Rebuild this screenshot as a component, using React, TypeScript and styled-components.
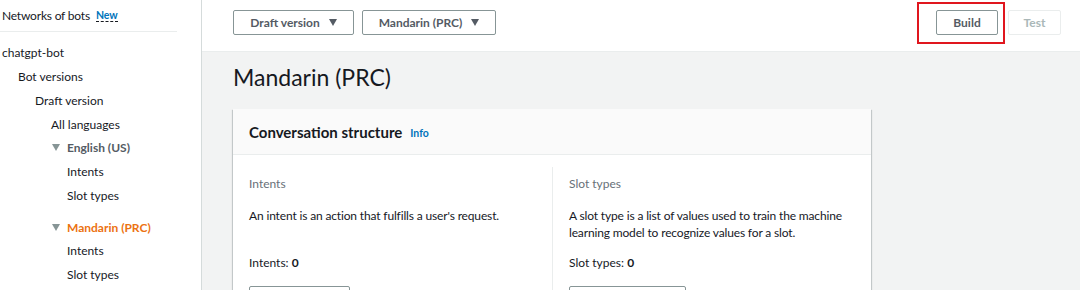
import React from "react";
import styled, { createGlobalStyle } from "styled-components";

const Global = createGlobalStyle`
  html, body { margin: 0; padding: 0; background: #f2f3f3; }
  body { font-family: Lato, Roboto, "Liberation Sans", sans-serif; color: #16191f; }
  * { box-sizing: border-box; }
`;

const Page = styled.div`
  display: flex;
  width: 1080px;
  height: 290px;
  overflow: hidden;
  background: #f2f3f3;
`;

const Sidebar = styled.nav`
  width: 202px;
  flex: none;
  background: #fff;
  border-right: 1px solid #d5dbdb;
  padding-top: 6px;
`;

const SideTop = styled.div`
  display: flex;
  align-items: center;
  gap: 6px;
  height: 19px;
  padding-left: 2px;
  font-size: 12px;
  letter-spacing: -0.2px;
  color: #16191f;
`;

const NewBadge = styled.span`
  font-size: 10.5px;
  font-weight: 700;
  letter-spacing: 0;
  color: #0073bb;
  border-bottom: 1px dashed #16191f;
  line-height: 12px;
`;

const SideDivider = styled.hr`
  width: 177px;
  margin: 6px 0 9px 0;
  border: none;
  border-top: 1px solid #eaeded;
`;

const NavItem = styled.div<{ $indent: number; $active?: boolean; $bold?: boolean; $gapTop?: number }>`
  display: flex;
  align-items: center;
  height: 23.75px;
  margin-top: ${(p) => p.$gapTop ?? 0}px;
  padding-left: ${(p) => p.$indent}px;
  font-size: 12px;
  font-weight: ${(p) => (p.$bold ? 700 : 400)};
  color: ${(p) => (p.$active ? "#ec7211" : p.$bold ? "#545b64" : "#16191f")};
`;

const Caret = styled.span`
  display: inline-block;
  width: 0;
  height: 0;
  border-left: 4px solid transparent;
  border-right: 4px solid transparent;
  border-top: 7px solid #879596;
  margin-right: 7px;
`;

const Main = styled.main`
  flex: 1;
  display: flex;
  flex-direction: column;
  min-width: 0;
`;

const TopBar = styled.div`
  flex: none;
  height: 52px;
  background: #fff;
  border-bottom: 1px solid #eaeded;
  display: flex;
  align-items: flex-start;
  padding: 10px 19px 0 31px;
  gap: 8px;
`;

const Dropdown = styled.button<{ $w: number }>`
  width: ${(p) => p.$w}px;
  height: 25px;
  background: #fff;
  border: 1px solid #879596;
  border-radius: 2px;
  display: flex;
  align-items: center;
  justify-content: center;
  gap: 9px;
  font-family: inherit;
  font-size: 12px;
  font-weight: 700;
  color: #545b64;
  padding: 0;
`;

const DownTri = styled.span`
  display: inline-block;
  width: 0;
  height: 0;
  border-left: 4px solid transparent;
  border-right: 4px solid transparent;
  border-top: 7px solid #545b64;
`;

const Spacer = styled.div`
  flex: 1;
`;

const HighlightWrap = styled.div`
  position: relative;
  display: flex;
  margin-right: 2px;
`;

const Annotation = styled.div`
  position: absolute;
  left: -19px;
  top: -8px;
  width: 88px;
  height: 42px;
  border: 2px solid #e0161e;
  pointer-events: none;
`;

const ActionButton = styled.button<{ $w: number; $disabled?: boolean }>`
  width: ${(p) => p.$w}px;
  height: 25px;
  background: #fff;
  border: 1px solid ${(p) => (p.$disabled ? "#eaeded" : "#879596")};
  border-radius: 2px;
  font-family: inherit;
  font-size: 12px;
  font-weight: 700;
  color: ${(p) => (p.$disabled ? "#aab7b8" : "#545b64")};
  padding: 0;
`;

const Content = styled.div`
  padding: 10px 0 0 31px;
`;

const Title = styled.h1`
  margin: 0;
  font-size: 23px;
  font-weight: 400;
  line-height: 30px;
  color: #16191f;
`;

const Card = styled.section`
  margin-top: 17px;
  width: 638px;
  background: #fff;
  box-shadow: 0 1px 1px 0 rgba(0, 28, 36, 0.3), 1px 1px 1px 0 rgba(0, 28, 36, 0.15), -1px 1px 1px 0 rgba(0, 28, 36, 0.15);
`;

const CardHeader = styled.div`
  height: 46px;
  background: #fafafa;
  border-bottom: 1px solid #eaeded;
  display: flex;
  align-items: center;
  gap: 8px;
  padding-left: 16px;
`;

const CardTitle = styled.h2`
  margin: 0;
  font-size: 15px;
  font-weight: 700;
  color: #16191f;
`;

const InfoLink = styled.span`
  font-size: 10.5px;
  font-weight: 700;
  color: #0073bb;
  margin-top: 2px;
`;

const Columns = styled.div`
  display: grid;
  grid-template-columns: 319px 319px;
  padding-top: 12px;
`;

const Column = styled.div<{ $divider?: boolean }>`
  padding: 8px 16px 0 16px;
  border-left: ${(p) => (p.$divider ? "1px solid #eaeded" : "none")};
  height: 140px;
`;

const Label = styled.div`
  font-size: 12px;
  color: #687078;
  line-height: 17px;
`;

const Desc = styled.p`
  margin: 15px 0 0 0;
  font-size: 12px;
  letter-spacing: -0.15px;
  line-height: 17px;
  height: 34px;
  color: #16191f;
`;

const Count = styled.div`
  margin-top: 13px;
  font-size: 12px;
  line-height: 17px;
  color: #16191f;
  b { font-weight: 700; }
`;

const ColButton = styled.div<{ $w: number }>`
  margin-top: 15px;
  width: ${(p) => p.$w}px;
  height: 25px;
  border: 1px solid #879596;
  border-radius: 2px;
`;

export default function App() {
  return (
    <>
      <Global />
      <Page>
        <Sidebar>
          <SideTop>
            Networks of bots <NewBadge>New</NewBadge>
          </SideTop>
          <SideDivider />
          <NavItem $indent={2}>chatgpt-bot</NavItem>
          <NavItem $indent={18}>Bot versions</NavItem>
          <NavItem $indent={35}>Draft version</NavItem>
          <NavItem $indent={51}>All languages</NavItem>
          <NavItem $indent={52} $bold>
            <Caret />
            English (US)
          </NavItem>
          <NavItem $indent={67}>Intents</NavItem>
          <NavItem $indent={67}>Slot types</NavItem>
          <NavItem $indent={52} $bold $active $gapTop={8}>
            <Caret />
            Mandarin (PRC)
          </NavItem>
          <NavItem $indent={67}>Intents</NavItem>
          <NavItem $indent={67}>Slot types</NavItem>
        </Sidebar>
        <Main>
          <TopBar>
            <Dropdown $w={121}>
              Draft version <DownTri />
            </Dropdown>
            <Dropdown $w={134}>
              Mandarin (PRC) <DownTri />
            </Dropdown>
            <Spacer />
            <HighlightWrap>
              <Annotation />
              <ActionButton $w={62}>Build</ActionButton>
            </HighlightWrap>
            <ActionButton $w={53} $disabled>
              Test
            </ActionButton>
          </TopBar>
          <Content>
            <Title>Mandarin (PRC)</Title>
            <Card>
              <CardHeader>
                <CardTitle>Conversation structure</CardTitle>
                <InfoLink>Info</InfoLink>
              </CardHeader>
              <Columns>
                <Column>
                  <Label>Intents</Label>
                  <Desc>An intent is an action that fulfills a user's request.</Desc>
                  <Count>
                    Intents: <b>0</b>
                  </Count>
                  <ColButton $w={101} />
                </Column>
                <Column $divider>
                  <Label>Slot types</Label>
                  <Desc>A slot type is a list of values used to train the machine learning model to recognize values for a slot.</Desc>
                  <Count>
                    Slot types: <b>0</b>
                  </Count>
                  <ColButton $w={117} />
                </Column>
              </Columns>
            </Card>
          </Content>
        </Main>
      </Page>
    </>
  );
}
